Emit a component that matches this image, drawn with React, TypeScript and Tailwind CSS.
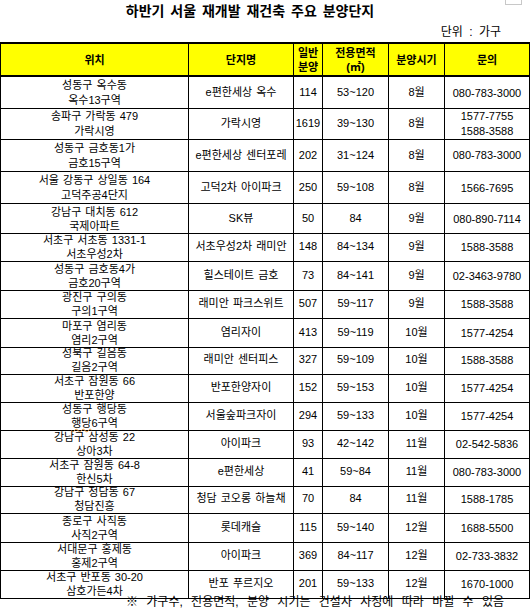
import React from "react";

type Row = {
  loc1: string;
  loc2: string;
  name: string;
  units: string;
  area: string;
  month: string;
  phone: string[];
  h: number;
};

const raw: [string, string, string, string, string, string, string[], number][] = [
  ["성동구 옥수동", "옥수13구역", "e편한세상 옥수", "114", "53~120", "8월", ["080-783-3000"], 31],
  ["송파구 가락동 479", "가락시영", "가락시영", "1619", "39~130", "8월", ["1577-7755", "1588-3588"], 31],
  ["성동구 금호동1가", "금호15구역", "e편한세상 센터포레", "202", "31~124", "8월", ["080-783-3000"], 33],
  ["서울 강동구 상일동 164", "고덕주공4단지", "고덕2차 아이파크", "250", "59~108", "8월", ["1566-7695"], 31],
  ["강남구 대치동 612", "국제아파트", "SK뷰", "50", "84", "9월", ["080-890-7114"], 28],
  ["서초구 서초동 1331-1", "서초우성2차", "서초우성2차 래미안", "148", "84~134", "9월", ["1588-3588"], 29],
  ["성동구 금호동4가", "금호20구역", "힐스테이트 금호", "73", "84~141", "9월", ["02-3463-9780"], 28],
  ["광진구 구의동", "구의1구역", "래미안 파크스위트", "507", "59~117", "9월", ["1588-3588"], 29],
  ["마포구 염리동", "염리2구역", "염리자이", "413", "59~119", "10월", ["1577-4254"], 27],
  ["성북구 길음동", "길음2구역", "래미안 센터피스", "327", "59~109", "10월", ["1588-3588"], 28],
  ["서초구 잠원동 66", "반포한양", "반포한양자이", "152", "59~153", "10월", ["1577-4254"], 28],
  ["성동구 행당동", "행당6구역", "서울숲파크자이", "294", "59~133", "10월", ["1577-4254"], 28],
  ["강남구 삼성동 22", "상아3차", "아이파크", "93", "42~142", "11월", ["02-542-5836"], 28],
  ["서초구 잠원동 64-8", "한신5차", "e편한세상", "41", "59~84", "11월", ["080-783-3000"], 27],
  ["강남구 청담동 67", "청담진흥", "청담 코오롱 하늘채", "70", "84", "11월", ["1588-1785"], 29],
  ["종로구 사직동", "사직2구역", "롯데캐슬", "115", "59~140", "12월", ["1688-5500"], 28],
  ["서대문구 홍제동", "홍제2구역", "아이파크", "369", "84~117", "12월", ["02-733-3832"], 28],
  ["서초구 반포동 30-20", "삼호가든4차", "반포 푸르지오", "201", "59~133", "12월", ["1670-1000"], 29],
];

const rows: Row[] = raw.map(([loc1, loc2, name, units, area, month, phone, h]) => ({
  loc1,
  loc2,
  name,
  units,
  area,
  month,
  phone,
  h,
}));

const grid = "grid grid-cols-[189px_105px_29px_66px_56px_85px]";
const cell =
  "flex flex-col items-center justify-center border-r border-b border-black text-center whitespace-nowrap overflow-visible";

function Loc2({ text }: { text: string }) {
  if (text.startsWith("행당")) {
    return (
      <span>
        <span className="underline decoration-wavy decoration-[#e89a3c] decoration-1 underline-offset-[1px]">행당</span>
        {text.slice(2)}
      </span>
    );
  }
  return <span>{text}</span>;
}

export default function App() {
  return (
    <div
      className="relative w-[530px] h-[610px] bg-white text-black overflow-hidden"
      style={{ fontFamily: '"Liberation Sans", "Noto Sans CJK KR", sans-serif' }}
    >
      <div className="absolute top-0 left-[505px] w-[17px] h-[5px] border border-t-0 border-[#c8c8c8]" />

      <div className="h-[22px] flex items-center justify-center pr-[30px] text-[14px] font-bold [word-spacing:2px]">
        하반기 서울 재개발 재건축 주요 분양단지
      </div>
      <div className="h-[20px] flex items-center justify-end pr-[29px] text-[12px] [word-spacing:3px]">
        단위 : 가구
      </div>

      <div className={`${grid} h-[35px] bg-[#ffff00] font-bold text-[11px] leading-[14px]`}>
        <div className={`${cell} border-l border-t-2 border-b-2`}>위치</div>
        <div className={`${cell} border-t-2 border-b-2`}>단지명</div>
        <div className={`${cell} border-t-2 border-b-2`}>
          <span>일반</span>
          <span>분양</span>
        </div>
        <div className={`${cell} border-t-2 border-b-2`}>
          <span>전용면적</span>
          <span>(㎡)</span>
        </div>
        <div className={`${cell} border-t-2 border-b-2`}>분양시기</div>
        <div className={`${cell} border-t-2 border-b-2`}>문의</div>
      </div>

      {rows.map((r, i) => {
        const lh = r.h >= 31 ? "leading-[15px] pt-[1px]" : "leading-[14px] pt-[2px]";
        return (
          <div key={i} className={`${grid} text-[11px] [word-spacing:1px]`} style={{ height: r.h }}>
            <div className={`${cell} border-l ${lh}`}>
              <span>{r.loc1}</span>
              <Loc2 text={r.loc2} />
            </div>
            <div className={cell}>{r.name}</div>
            <div className={cell}>{r.units}</div>
            <div className={cell}>{r.area}</div>
            <div className={cell}>{r.month}</div>
            <div className={`${cell} ${lh}`}>
              {r.phone.map((p) => (
                <span key={p}>{p}</span>
              ))}
            </div>
          </div>
        );
      })}

      <div className="h-[13px] flex items-start justify-end pr-[26px] text-[12px] leading-[11px] [word-spacing:5px]">
        ※ 가구수, 전용면적, 분양 시기는 건설사 사정에 따라 바뀔 수 있음
      </div>
    </div>
  );
}
